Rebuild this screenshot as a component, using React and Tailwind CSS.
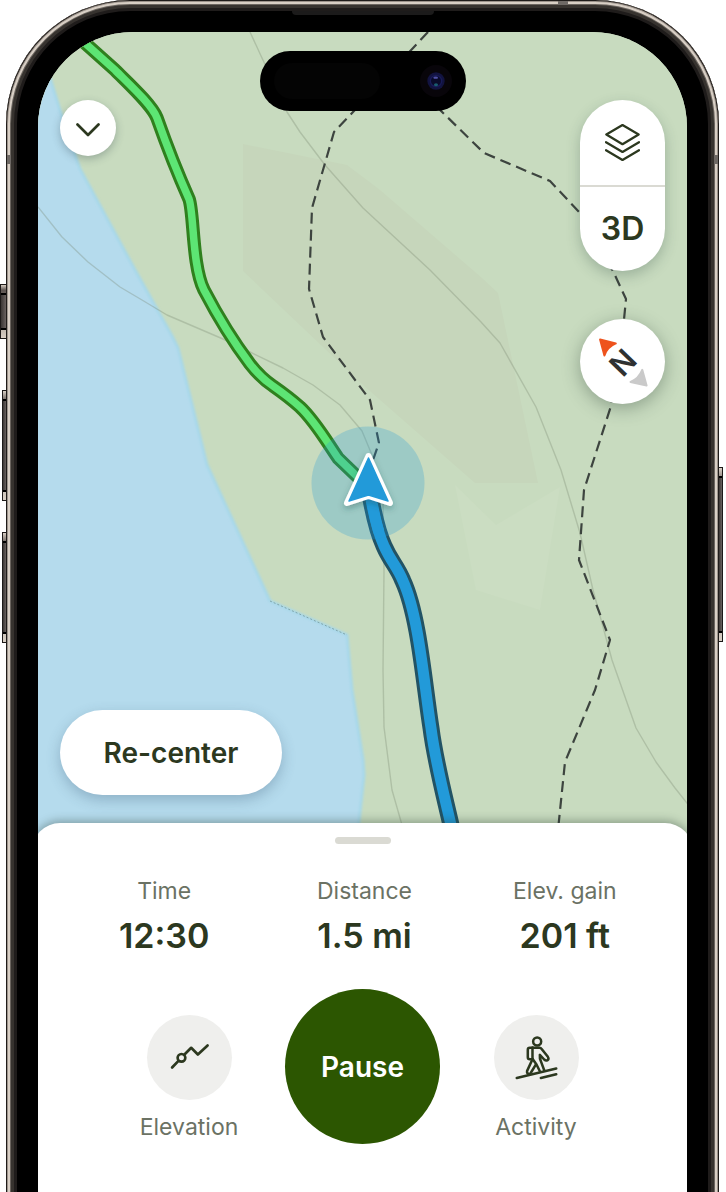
import React from "react";

const sans = "font-['Inter','Liberation_Sans',sans-serif]";

const TRAIL_DONE =
  "M60 20 L86 44 L115 70 C130 85 152 105 157 118 C163 135 177 172 189 199 C194 212 192 266 204 290 C216 313 232 340 250 364 C257 373 264 380 273 386 C283 393 291 399 300 407 C315 421 327 442 338 458 L368 487";
const TRAIL_AHEAD =
  "M368 484 C372 502 374 524 384 546 C391 562 397 566 403 581 C419 616 424 684 431 728 C435 760 443 790 451 825 L456 850";

function MapCanvas() {
  return (
    <svg
      className="absolute inset-0 h-full w-full"
      viewBox="38 32 649 1160"
      preserveAspectRatio="xMidYMin slice"
      fill="none"
      aria-hidden="true"
    >
      <defs>
        <filter id="soft" x="-10%" y="-10%" width="120%" height="120%">
          <feGaussianBlur stdDeviation="1" />
        </filter>
        <filter id="markerShadow" x="-50%" y="-50%" width="200%" height="200%">
          <feDropShadow dx="0" dy="3" stdDeviation="3" floodColor="#1c4a44" floodOpacity="0.35" />
        </filter>
      </defs>
      <rect x="0" y="0" width="726" height="1192" fill="#c8dbbf" />
      <path d="M243 144 L347 165 L380 190 L482 278 L498 293 L538 483 H475 L363 385 L243 271 Z" fill="#c6d6bb" />
      <path d="M455 485 L496 525 L560 487 L540 610 L476 590 Z" fill="#cbddc2" />
      <path
        d="M38 40 L50 78 L63 120 L80 169 L135 270 L172 336 L178 348 L207 465 L270 601 L347 635 L352 690 L363 760 L364 775 L357 840 L38 860 Z"
        fill="#b5dbed"
      />
      <path
        d="M46 65 L63 120 L80 169 L135 270 L172 336 L178 348 L207 465 L270 601 L347 635 L352 690 L363 760 L364 775 L357 840"
        stroke="#a8d8e9"
        strokeWidth="3"
        filter="url(#soft)"
      />
      <path d="M270 601 L347 635" stroke="#7fa5ab" strokeWidth="1" strokeDasharray="2 2" />
      <g stroke="#74806a" strokeOpacity="0.3" strokeWidth="1.4" strokeLinejoin="round">
        <path d="M250 32 L262 58 L287 112 L300 132 L325 165 L363 208 L430 270 L481 322 L500 343 L536 407 L561 470 L580 533 L593 590 L612 660 L636 728 L656 762 L675 788 L690 807" />
        <path d="M38 207 L62 237 L88 262 L120 287 L142 300 L167 315 L223 339 L250 352 L283 368 L313 385 L340 405 L362 431 L372 455 L383 500 L384 570 L383 670 L384 727 L392 790 L402 825" />
      </g>
      <g stroke="#3d443f" strokeWidth="2.2" strokeDasharray="11 6" strokeLinejoin="round">
        <path d="M428 32 L353 112 L334 132 L312 208 L309 289 L323 337 L370 400 L379 443 L373 460" />
        <path d="M436 106 L484 153 L550 181 L580 213 L613 271 L626 299 L622 340 L611 406 L584 490 L579 560 L610 640 L595 690 L565 762 L558 830" />
      </g>
      <path d={TRAIL_DONE} stroke="#2f801e" strokeWidth="13.5" />
      <path d={TRAIL_DONE} stroke="#5de574" strokeWidth="7.5" />
      <path d={TRAIL_AHEAD} stroke="#225365" strokeWidth="17" />
      <path d={TRAIL_AHEAD} stroke="#229ad9" strokeWidth="11" />
      <circle cx="368" cy="483" r="56.5" fill="#229ad9" fillOpacity="0.26" />
      <path d="M368.5 483 C372 502 374 516 379 532" stroke="#229ad9" strokeWidth="11" />
      <path
        d="M368.5 456 L347 503 L368.5 496 L390 503 Z"
        fill="#fff"
        stroke="#fff"
        strokeWidth="6"
        strokeLinejoin="round"
        filter="url(#markerShadow)"
      />
      <path d="M368.5 458 L349 501 L368.5 495 L388 501 Z" fill="#229ad9" stroke="#229ad9" strokeWidth="1.5" strokeLinejoin="round" />
    </svg>
  );
}

function LayersIcon() {
  return (
    <svg className="h-[37px] w-[35px]" viewBox="0 0 104 110" fill="none" stroke="#2c381f" strokeWidth="6.8" strokeLinejoin="round" strokeLinecap="round" aria-hidden="true">
      <path d="M52 3 L100 31 L52 60 L4 31 Z" />
      <path d="M3 54 L52 83 L101 54" />
      <path d="M3 78 L52 107 L101 78" />
    </svg>
  );
}

function ElevationIcon() {
  return (
    <svg className="h-full w-full" viewBox="0 0 254 254" fill="none" stroke="#2c381f" strokeWidth="8" strokeLinecap="round" strokeLinejoin="round" aria-hidden="true">
      <path d="M75 157 L94 137" />
      <circle cx="103" cy="128" r="11.5" />
      <path d="M112 118 L132 98 L152 118 L181 91" />
    </svg>
  );
}

function HikerIcon() {
  return (
    <svg className="h-full w-full" viewBox="0 0 254 254" fill="none" stroke="#2c381f" strokeWidth="7.5" strokeLinecap="round" strokeLinejoin="round" aria-hidden="true">
      <circle cx="129" cy="79" r="12" />
      <path d="M116 98 H107 Q101 98 101 104 V126 Q101 132 107 132 H115" />
      <path d="M115 98 V132 L99 167 Q97 175 105 176 Q109 176 111 171 L125 148" />
      <path d="M115 98 H136 Q140 98 143 102 L161 125 Q165 131 160 135 Q155 138 150 133 L137 119 Q136 130 140 138 L150 165" />
      <path d="M116 132 L127 148 L137 168" />
      <path d="M68 188 L186 160" />
      <path d="M140 188 L186 177" />
    </svg>
  );
}

function Compass() {
  return (
    <svg className="h-full w-full" viewBox="0 0 254 254" strokeLinejoin="round" aria-hidden="true">
      <path d="M60 61 L107 73 Q81 84 73 109 Z" fill="#ee531d" stroke="#ee531d" strokeWidth="6" />
      <path d="M199 199 L151 188 Q176 178 186 152 Z" fill="#cacaca" stroke="#cacaca" strokeWidth="6" />
      <text
        x="129"
        y="162"
        transform="rotate(-46 129 131)"
        textAnchor="middle"
        fontSize="90"
        fontWeight="600"
        fill="#2f3131"
        className={sans}
      >
        N
      </text>
    </svg>
  );
}

function SideButton({ className }) {
  return (
    <span
      className={`absolute border border-[#1d1a19] bg-linear-to-b from-[#d8cfc5] via-[#5d5552] via-10% to-[#d8cfc5] ${className}`}
    >
      <span className="absolute inset-x-0 top-2 bottom-2 border-y-2 border-black bg-linear-to-r from-[#3a3634] to-[#6a6260]" />
    </span>
  );
}

const stats = [
  { label: "Time", value: "12:30" },
  { label: "Distance", value: "1.5 mi" },
  { label: "Elev. gain", value: "201 ft" },
];

function RoundAction({ label, children }) {
  return (
    <button type="button" className="flex w-[100px] flex-col items-center gap-3 pb-0.5">
      <span className="size-[85px] rounded-full bg-[#efefed]">{children}</span>
      <span className="text-[23px] leading-[30px] whitespace-nowrap text-[#6b7264]">{label}</span>
    </button>
  );
}

export default function App() {
  return (
    <main className={`min-h-screen bg-white pr-[7px] pl-1.5 ${sans} text-[#2c381f]`}>
      <div className="relative flex min-h-screen flex-col">
        <SideButton className="top-[284px] -left-1.5 h-[55px] w-[7px]" />
        <SideButton className="top-[390px] -left-1 h-[111px] w-[5px]" />
        <SideButton className="top-[532px] -left-1 h-[111px] w-[5px]" />
        <SideButton className="top-[467px] -right-1 h-[175px] w-[5px]" />

        <div className="relative flex flex-1 flex-col overflow-hidden rounded-t-[124px] bg-black px-8 pt-8">
          <span className="absolute inset-x-0 top-0 -bottom-5 rounded-t-[124px] shadow-[inset_0_0_0_1px_#1f1c1a,inset_0_0_0_2px_#9c938b,inset_0_0_0_4px_#d8cfc5,inset_0_0_0_5px_#6b655f,inset_0_0_0_8px_#37332f,inset_0_0_0_11px_#1f1c1b]" />
          <span className="absolute top-[155px] left-px h-[9px] w-1 bg-[#6e6965]" />
          <span className="absolute top-[155px] right-px h-[9px] w-1 bg-[#6e6965]" />
          <span className="absolute top-px right-[151px] h-1 w-[10px] bg-[#6e6965]" />
          <span className="absolute top-[11px] left-1/2 h-1 w-[142px] -translate-x-1/2 rounded-b-sm bg-[#1c1b1b]" />

          <div className="relative flex flex-1 flex-col overflow-hidden rounded-t-[95px] bg-[#c8dbbf]">
            <MapCanvas />

            <div className="absolute top-[19px] left-1/2 flex h-[60px] w-[206px] -translate-x-1/2 items-center justify-between rounded-full bg-black px-3.5">
              <span className="h-9 w-[106px] rounded-full bg-[#040404]" />
              <svg className="size-8" viewBox="0 0 96 96" aria-hidden="true">
                <circle cx="48" cy="48" r="48" fill="#08050a" />
                <circle cx="48" cy="48" r="26" fill="#12133f" />
                <circle cx="48" cy="48" r="17" fill="#0a0b2a" stroke="#181a58" strokeWidth="4" />
                <ellipse cx="47" cy="38" rx="7" ry="3.5" fill="#5152a8" />
                <ellipse cx="48" cy="59" rx="6" ry="4.5" fill="#1a5c70" />
              </svg>
            </div>

            <section aria-label="Map" className="relative flex flex-1 flex-col justify-between px-[22px] pt-[68px] pb-7">
              <div className="flex items-start justify-between">
                <button
                  type="button"
                  aria-label="Collapse"
                  className="flex size-14 items-center justify-center rounded-full bg-white pt-1 shadow-[0_3px_8px_rgba(40,60,70,0.3)]"
                >
                  <svg className="h-[14px] w-6" viewBox="0 0 24 14" fill="none" stroke="#2c381f" strokeWidth="2.7" strokeLinecap="round" strokeLinejoin="round" aria-hidden="true">
                    <path d="M1.5 1.5 L12 12 L22.5 1.5" />
                  </svg>
                </button>
                <div className="flex flex-col items-center gap-12">
                  <div className="w-[85px] divide-y-2 divide-[#dadad3] overflow-hidden rounded-full bg-white shadow-[0_5px_14px_rgba(40,70,60,0.28)]">
                    <button type="button" aria-label="Map layers" className="flex h-[87px] w-full items-center justify-center">
                      <LayersIcon />
                    </button>
                    <button type="button" className="flex h-[84px] w-full items-center justify-center text-[32px] font-semibold">
                      3D
                    </button>
                  </div>
                  <button type="button" aria-label="Compass" className="size-[85px] rounded-full bg-white shadow-[0_4px_18px_rgba(40,60,50,0.38)]">
                    <Compass />
                  </button>
                </div>
              </div>
              <button
                type="button"
                className="h-[85px] w-[222px] self-start rounded-full bg-white text-[28px] font-semibold shadow-[0_5px_14px_rgba(50,80,110,0.3)]"
              >
                Re-center
              </button>
            </section>

            <section
              aria-label="Recording"
              className="relative -mx-1.5 flex flex-col items-center rounded-t-[28px] bg-white px-8 pt-3.5 pb-12 shadow-[0_-2px_10px_rgba(40,60,50,0.4)]"
            >
              <span className="h-[7px] w-14 rounded-full bg-[#dadad3]" />
              <dl className="mt-8 -mr-1 grid grid-cols-3 self-stretch text-center">
                {stats.map((s) => (
                  <div key={s.label} className="flex flex-col gap-2">
                    <dt className="text-[23px] leading-[30px] text-[#6b7264]">{s.label}</dt>
                    <dd className="text-[34px] leading-[44px] font-semibold">{s.value}</dd>
                  </div>
                ))}
              </dl>
              <div className="mt-[31px] flex items-end gap-[46px]">
                <RoundAction label="Elevation">
                  <ElevationIcon />
                </RoundAction>
                <button type="button" className="size-[155px] rounded-full bg-[#2c5601] text-[28px] font-semibold text-white">
                  Pause
                </button>
                <RoundAction label="Activity">
                  <HikerIcon />
                </RoundAction>
              </div>
            </section>
          </div>
        </div>
      </div>
    </main>
  );
}
